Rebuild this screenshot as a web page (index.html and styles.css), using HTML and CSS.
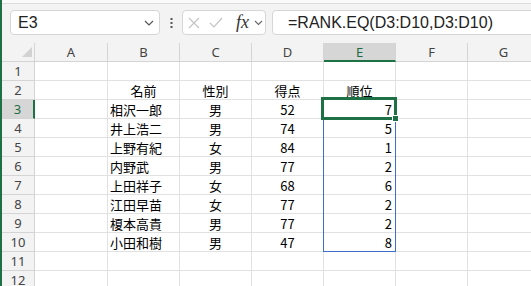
FILE: index.html
```html
<!DOCTYPE html>
<html lang="ja">
<head>
  <meta charset="UTF-8">
  <title>RANK.EQ</title>
  <link rel="stylesheet" href="styles.css">
</head>
<body>
  <div class="app">
    <div class="ribbon-edge"></div>

    <div class="formula-row">
      <div class="namebox">
        <span>E3</span>
        <svg class="chev" width="10" height="6" viewBox="0 0 10 6"><polyline points="1,1 5,5 9,1" fill="none" stroke="#555" stroke-width="1.2"/></svg>
      </div>
      <div class="grip">
        <svg width="3" height="10" viewBox="0 0 3 10"><rect x="0.5" y="0" width="2" height="2" fill="#555"/><rect x="0.5" y="4" width="2" height="2" fill="#555"/><rect x="0.5" y="8" width="2" height="2" fill="#555"/></svg>
      </div>
      <div class="fxbox">
        <svg class="cancel" width="12" height="12" viewBox="0 0 12 12"><path d="M1 1L11 11M11 1L1 11" stroke="#c4c4c4" stroke-width="1.2" fill="none"/></svg>
        <svg class="enter" width="14" height="12" viewBox="0 0 14 12"><polyline points="1,6 5,10 13,1" stroke="#c4c4c4" stroke-width="1.2" fill="none"/></svg>
        <span class="fx">fx</span>
        <svg class="chev-sm" width="9" height="6" viewBox="0 0 9 6"><polyline points="1,1 4.5,4.5 8,1" fill="none" stroke="#666" stroke-width="1.1"/></svg>
      </div>
      <div class="formula">=RANK.EQ(D3:D10,D3:D10)</div>
    </div>

    <div class="sheet">
      <div class="grid">
        <div class="corner"></div><div class="ch">A</div><div class="ch">B</div><div class="ch">C</div><div class="ch">D</div><div class="ch active">E</div><div class="ch">F</div><div class="ch">G</div>

        <div class="rh">1</div><div class="c"></div><div class="c"></div><div class="c"></div><div class="c"></div><div class="c"></div><div class="c"></div><div class="c"></div>
        <div class="rh">2</div><div class="c"></div><div class="c m">名前</div><div class="c m">性別</div><div class="c m">得点</div><div class="c m">順位</div><div class="c"></div><div class="c"></div>
        <div class="rh active">3</div><div class="c"></div><div class="c l">相沢一郎</div><div class="c m">男</div><div class="c m">52</div><div class="c r">7</div><div class="c"></div><div class="c"></div>
        <div class="rh">4</div><div class="c"></div><div class="c l">井上浩二</div><div class="c m">男</div><div class="c m">74</div><div class="c r">5</div><div class="c"></div><div class="c"></div>
        <div class="rh">5</div><div class="c"></div><div class="c l">上野有紀</div><div class="c m">女</div><div class="c m">84</div><div class="c r">1</div><div class="c"></div><div class="c"></div>
        <div class="rh">6</div><div class="c"></div><div class="c l">内野武</div><div class="c m">男</div><div class="c m">77</div><div class="c r">2</div><div class="c"></div><div class="c"></div>
        <div class="rh">7</div><div class="c"></div><div class="c l">上田祥子</div><div class="c m">女</div><div class="c m">68</div><div class="c r">6</div><div class="c"></div><div class="c"></div>
        <div class="rh">8</div><div class="c"></div><div class="c l">江田早苗</div><div class="c m">女</div><div class="c m">77</div><div class="c r">2</div><div class="c"></div><div class="c"></div>
        <div class="rh">9</div><div class="c"></div><div class="c l">榎本高貴</div><div class="c m">男</div><div class="c m">77</div><div class="c r">2</div><div class="c"></div><div class="c"></div>
        <div class="rh">10</div><div class="c"></div><div class="c l">小田和樹</div><div class="c m">男</div><div class="c m">47</div><div class="c r">8</div><div class="c"></div><div class="c"></div>
        <div class="rh">11</div><div class="c"></div><div class="c"></div><div class="c"></div><div class="c"></div><div class="c"></div><div class="c"></div><div class="c"></div>
        <div class="rh">12</div><div class="c"></div><div class="c"></div><div class="c"></div><div class="c"></div><div class="c"></div><div class="c"></div><div class="c"></div>
      </div>

      <!-- spill range E3:E10 and active cell -->
      <div class="spill"></div>
      <div class="selection"><span class="handle"></span></div>
    </div>
  </div>
</body>
</html>
```

FILE: styles.css
```css
body {
  margin: 0;
  width: 531px;
  height: 286px;
  overflow: hidden;
  background: #fff;
  font-family: "Noto Sans", "Noto Sans CJK JP", sans-serif;
}
.app {
  height: 286px;
  border-left: 2px solid #1e7145;
  background: #f3f3f3;
  display: flex;
  flex-direction: column;
  overflow: hidden;
}
.ribbon-edge {
  height: 3px;
  background: #fafafa;
  border-bottom: 1px solid #dcdcdc;
}
.formula-row {
  display: flex;
  align-items: center;
  padding: 6px 0 8px 8px;
}
.namebox,
.fxbox,
.formula {
  height: 25px;
  box-sizing: border-box;
  background: #fff;
  border: 1px solid #d6d6d6;
  border-radius: 4px;
  display: flex;
  align-items: center;
}
.namebox {
  width: 150px;
  justify-content: space-between;
  padding: 0 5px 0 7px;
  font-family: "Liberation Sans", sans-serif;
  font-size: 16px;
  color: #222;
}
.grip {
  width: 22px;
  display: flex;
  justify-content: center;
}
.fxbox {
  width: 84px;
}
.cancel {
  margin-left: 5px;
}
.enter {
  margin-left: 9px;
}
.fx {
  margin-left: 13px;
  width: 15px;
  font-family: "Liberation Serif", serif;
  font-style: italic;
  font-size: 18px;
  color: #333;
}
.chev-sm {
  margin-left: 3px;
}
.formula {
  flex: 1;
  margin-left: 6px;
  margin-right: -8px;
  padding-left: 15px;
  font-family: "Liberation Sans", sans-serif;
  font-size: 16px;
  color: #222;
}

.sheet {
  flex: 1;
  position: relative;
  overflow: hidden;
  background: #fff;
}
.grid {
  display: grid;
  grid-template-columns: 33px 73px repeat(6, 72px);
  grid-auto-rows: 19px;
}
.grid > div {
  box-sizing: border-box;
  border-right: 1px solid #e1e1e1;
  border-bottom: 1px solid #e1e1e1;
  display: flex;
  align-items: center;
  white-space: nowrap;
  overflow: hidden;
}
.grid .corner,
.grid .ch,
.grid .rh {
  background: #f3f3f3;
  border-color: #d4d4d4;
  color: #444;
  font-family: "Noto Sans", sans-serif;
  font-size: 13px;
  justify-content: center;
}
.corner {
  position: relative;
}
.corner::after {
  content: "";
  position: absolute;
  left: 20px;
  top: 4px;
  width: 10px;
  height: 10px;
  background: #d2d2d2;
  clip-path: polygon(100% 0, 100% 100%, 0 100%);
}
.grid .ch.active {
  background: #d6d6d6;
  color: #1e6b41;
  border-bottom: 2px solid #1e7145;
}
.grid .rh.active {
  background: #d6d6d6;
  color: #1e6b41;
  border-right: 2px solid #1e7145;
}
.c {
  font-family: "Noto Sans CJK JP", sans-serif;
  font-size: 13px;
  color: #000;
}
.c.l {
  padding-left: 2px;
}
.c.m {
  justify-content: center;
}
.c.r {
  justify-content: flex-end;
  padding-right: 3px;
}

.spill {
  position: absolute;
  left: 321px;
  top: 56px;
  width: 73px;
  height: 153px;
  box-sizing: border-box;
  border: 1px solid #3f6fc6;
}
.selection {
  position: absolute;
  left: 319px;
  top: 54px;
  width: 76px;
  height: 23px;
  box-sizing: border-box;
  border: 3px solid #1e7145;
}
.handle {
  position: absolute;
  left: 68px;
  top: 15px;
  width: 5px;
  height: 5px;
  background: #1e7145;
  border: 1px solid #fff;
}
```
